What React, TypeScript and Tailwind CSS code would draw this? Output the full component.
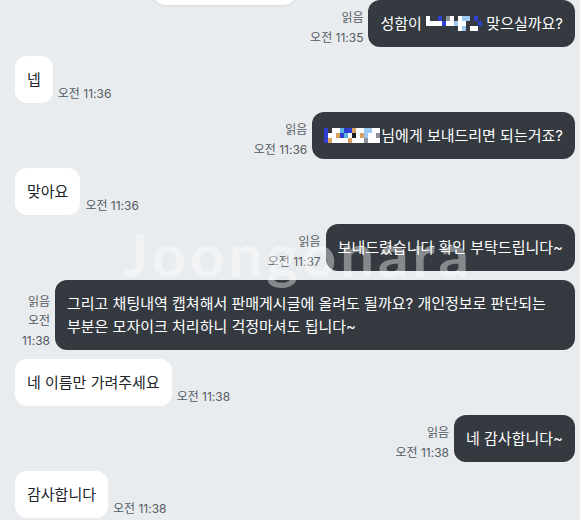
import React from "react";

type Msg = {
  mine: boolean;
  time: string;
  text: React.ReactNode;
};

const palette: Record<string, string> = {
  W: "#ffffff",
  B: "#2f3fd0",
  L: "#9cc8f2",
  S: "#5ab4e6",
  T: "#d8a060",
  K: "#1c1f24",
  G: "#8a9098",
};

function Mosaic({ rows, cell = 4, h = 5 }: { rows: string[]; cell?: number; h?: number }) {
  const w = rows[0].length * cell;
  return (
    <svg width={w} height={rows.length * h} className="inline-block align-[-2px] relative z-10">
      {rows.map((r, y) =>
        r.split("").map((c, x) =>
          palette[c] ? <rect key={`${x}-${y}`} x={x * cell} y={y * h} width={cell} height={h} fill={palette[c]} /> : null
        )
      )}
    </svg>
  );
}

const messages: Msg[] = [
  {
    mine: true,
    time: "오전 11:35",
    text: (
      <>
        성함이{" "}
        <Mosaic rows={["W..B.GW.WLL.B.", "WWWWBWWLWW...B", "........WL.WW."]} /> 맞으실까요?
      </>
    ),
  },
  { mine: false, time: "오전 11:36", text: "넵" },
  {
    mine: true,
    time: "오전 11:36",
    text: (
      <>
        <Mosaic rows={["B.WWSBBTWWLLWW", "BWWTBSWKWTLWWG", "BTWWWWTWWWGWWW"]} cell={4} h={5} />
        <span className="ml-[1px]">님에게 보내드리면 되는거죠?</span>
      </>
    ),
  },
  { mine: false, time: "오전 11:36", text: "맞아요" },
  { mine: true, time: "오전 11:37", text: "보내드렸습니다 확인 부탁드립니다~" },
  {
    mine: true,
    time: "오전 11:38",
    text: "그리고 채팅내역 캡쳐해서 판매게시글에 올려도 될까요? 개인정보로 판단되는 부분은 모자이크 처리하니 걱정마셔도 됩니다~",
  },
  { mine: false, time: "오전 11:38", text: "네 이름만 가려주세요" },
  { mine: true, time: "오전 11:38", text: "네 감사합니다~" },
  { mine: false, time: "오전 11:38", text: "감사합니다" },
];

export default function App() {
  return (
    <div
      className="relative w-[580px] h-[520px] overflow-hidden bg-[#e9ecef] text-[15px]"
      style={{ fontFamily: "Inter, 'Noto Sans CJK KR', sans-serif" }}
    >
      <div className="absolute left-[152px] -top-[40px] w-[145px] h-[45px] bg-white rounded-[14px] shadow-[0_1px_3px_rgba(0,0,0,0.08)]" />

      <div className="flex flex-col gap-[9px] pl-[15px] pr-[5px]">
        {messages.map((m, i) =>
          m.mine ? (
            <div key={i} className="flex justify-end items-end gap-[5px]">
              <div className="text-right text-[12px] leading-[19.5px] text-[#555b62]">
                <div>읽음</div>
                <div>{m.time}</div>
              </div>
              <div className="shrink-0 max-w-[520px] bg-[#343a40] text-white rounded-[12px] px-3 py-3 leading-[23px]">
                {m.text}
              </div>
            </div>
          ) : (
            <div key={i} className="flex items-end gap-[5px]">
              <div className="bg-white text-[#212529] rounded-[12px] px-3 py-3 leading-[23px]">{m.text}</div>
              <div className="text-[12px] leading-[19.5px] text-[#555b62]">{m.time}</div>
            </div>
          )
        )}
      </div>

      <div
        className="absolute left-[123px] top-[224px] text-[60px] leading-none font-bold tracking-[4px] text-white/40 pointer-events-none select-none z-20"
        style={{ fontFamily: "Lato, sans-serif" }}
      >
        Joongonara
      </div>
    </div>
  );
}
